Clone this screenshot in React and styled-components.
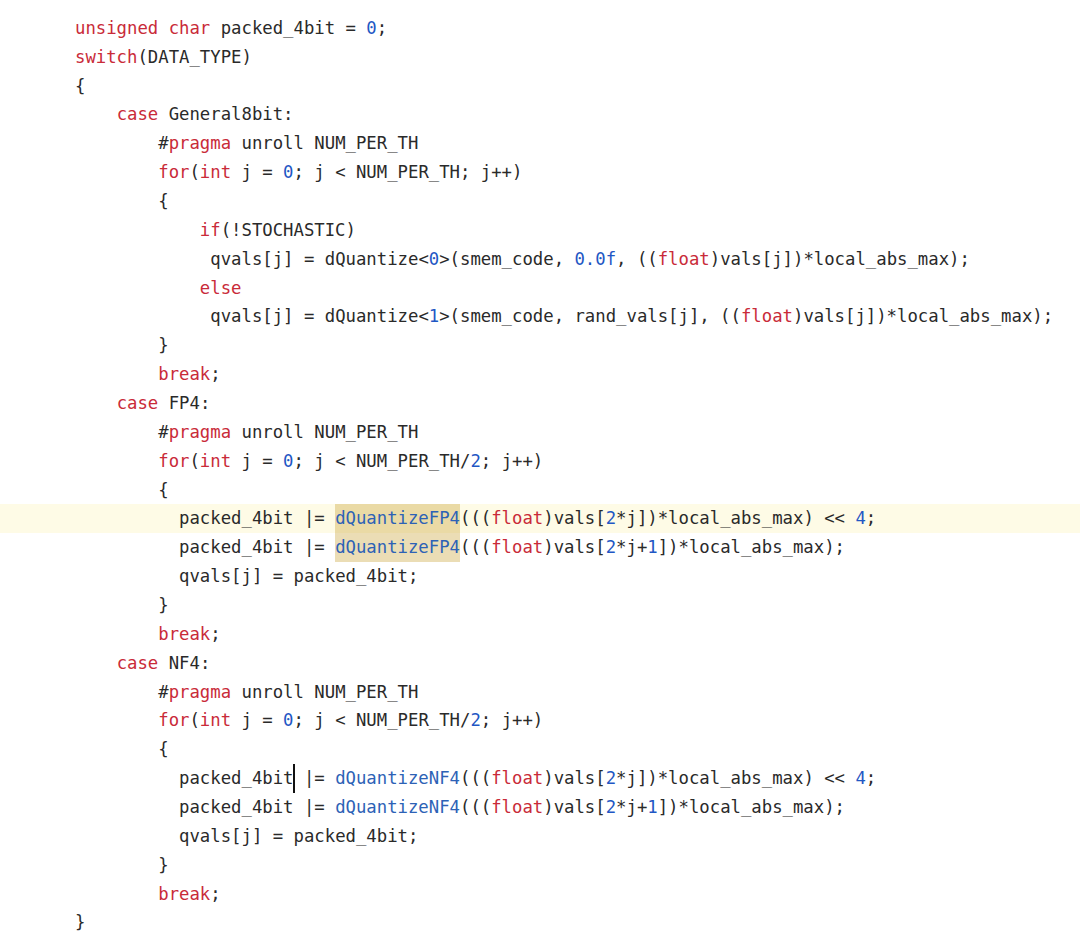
import React from "react";
import styled, { createGlobalStyle } from "styled-components";

const GlobalStyle = createGlobalStyle`
  html, body {
    margin: 0;
    padding: 0;
    background: #fff;
  }
`;

const Editor = styled.div`
  width: 1080px;
  height: 934px;
  padding-top: 13.8px;
  box-sizing: border-box;
  overflow: hidden;
  background: #fff;
  font-family: "DejaVu Sans Mono", "Liberation Mono", monospace;
  font-size: 17.3px;
  color: #2a2a2a;
`;

const Line = styled.div`
  height: 28.86px;
  line-height: 28.86px;
  padding-left: 75px;
  white-space: pre;
  background: ${(p) => (p.$active ? "#fefbe6" : "transparent")};
`;

const Keyword = styled.span`
  color: #c92b39;
`;

const Num = styled.span`
  color: #1f57c4;
`;

const Fn = styled.span`
  color: #2d62b6;
`;

const Mark = styled.span`
  display: inline-block;
  vertical-align: top;
  line-height: 28.86px;
  height: 28.86px;
  background: rgba(200, 160, 50, 0.36);
`;

const Caret = styled.span`
  display: inline-block;
  vertical-align: top;
  width: 2px;
  height: 29px;
  margin: 0 -1px;
  background: #111;
`;

const KEYWORDS = new Set([
  "unsigned", "char", "switch", "case", "for", "int", "if", "else", "break", "float", "pragma",
]);

const lines = [
  "unsigned char packed_4bit = 0;",
  "switch(DATA_TYPE)",
  "{",
  "    case General8bit:",
  "        #pragma unroll NUM_PER_TH",
  "        for(int j = 0; j < NUM_PER_TH; j++)",
  "        {",
  "            if(!STOCHASTIC)",
  "             qvals[j] = dQuantize<0>(smem_code, 0.0f, ((float)vals[j])*local_abs_max);",
  "            else",
  "             qvals[j] = dQuantize<1>(smem_code, rand_vals[j], ((float)vals[j])*local_abs_max);",
  "        }",
  "        break;",
  "    case FP4:",
  "        #pragma unroll NUM_PER_TH",
  "        for(int j = 0; j < NUM_PER_TH/2; j++)",
  "        {",
  "          packed_4bit |= ⟦dQuantizeFP4⟧(((float)vals[2*j])*local_abs_max) << 4;",
  "          packed_4bit |= ⟦dQuantizeFP4⟧(((float)vals[2*j+1])*local_abs_max);",
  "          qvals[j] = packed_4bit;",
  "        }",
  "        break;",
  "    case NF4:",
  "        #pragma unroll NUM_PER_TH",
  "        for(int j = 0; j < NUM_PER_TH/2; j++)",
  "        {",
  "          packed_4bit¦ |= dQuantizeNF4(((float)vals[2*j])*local_abs_max) << 4;",
  "          packed_4bit |= dQuantizeNF4(((float)vals[2*j+1])*local_abs_max);",
  "          qvals[j] = packed_4bit;",
  "        }",
  "        break;",
  "}",
];

// tiny highlighter: words, numbers, marks, caret
function highlight(src) {
  const out = [];
  const re = /(⟦[^⟧]*⟧)|(¦)|([A-Za-z_][A-Za-z0-9_]*)|(\d+(?:\.\d+)?f?)|([^A-Za-z_\d⟦¦]+)/g;
  let m;
  let k = 0;
  while ((m = re.exec(src))) {
    if (m[1]) {
      const word = m[1].slice(1, -1);
      out.push(
        <Mark key={k++}>
          <Fn>{word}</Fn>
        </Mark>
      );
    } else if (m[2]) {
      out.push(<Caret key={k++} />);
    } else if (m[3]) {
      const w = m[3];
      if (KEYWORDS.has(w)) out.push(<Keyword key={k++}>{w}</Keyword>);
      else if (/^dQuantize(FP4|NF4)$/.test(w)) out.push(<Fn key={k++}>{w}</Fn>);
      else out.push(w);
    } else if (m[4]) {
      out.push(<Num key={k++}>{m[4]}</Num>);
    } else {
      out.push(m[5]);
    }
  }
  return out;
}

export default function App() {
  return (
    <>
      <GlobalStyle />
      <Editor>
        {lines.map((src, i) => (
          <Line key={i} $active={i === 17}>
            {highlight(src)}
          </Line>
        ))}
      </Editor>
    </>
  );
}
